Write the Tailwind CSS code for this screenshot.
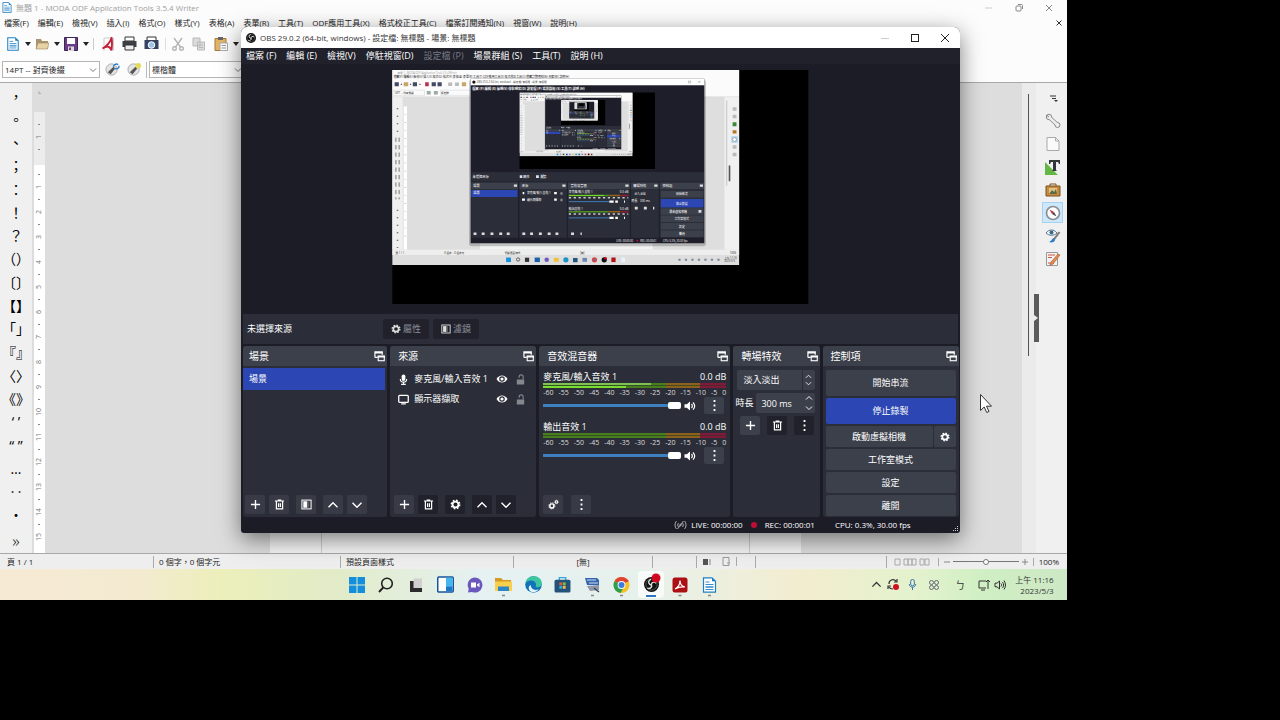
<!DOCTYPE html>
<html lang="zh-Hant">
<head>
    <meta charset="UTF-8">
    <meta name="viewport" content="width=device-width, initial-scale=1.0">
    <title>MODA ODF Application Tools - OBS</title>
    <script src="https://cdn.jsdelivr.net/npm/@tailwindcss/browser@4"></script>
</head>
<body class="h-screen overflow-hidden bg-black font-['Open_Sans','Noto_Sans_CJK_TC',sans-serif]">

    <!-- Shared icons -->
    <svg class="hidden">
        <symbol id="i-popout" viewBox="0 0 12 12"><path d="M1 7V1h8v3M1 2h8M1 7h3" fill="none" stroke="currentColor" stroke-width="1.3"/><rect x="4.6" y="5.6" width="6.6" height="5" fill="none" stroke="currentColor" stroke-width="1.2"/><path d="M4 6.2h8" stroke="currentColor" stroke-width="2"/></symbol>
        <symbol id="i-plus" viewBox="0 0 12 12"><path d="M6 1v10M1 6h10" stroke="currentColor" stroke-width="1.5"/></symbol>
        <symbol id="i-trash" viewBox="0 0 12 12"><path d="M1 2.2h10M4 1.2h4M2.6 2.5v8.3h6.8V2.5M5 4.5v4.3M7 4.5v4.3" fill="none" stroke="currentColor" stroke-width="1.3"/></symbol>
        <symbol id="i-filter" viewBox="0 0 12 12"><rect x="1" y="1.2" width="10" height="9.6" fill="none" stroke="currentColor" stroke-width="1.1"/><path d="M2.5 2.5h4v7h-4z" fill="currentColor"/><path d="M7.5 2.5v7" stroke="currentColor" stroke-width=".8" opacity=".6"/></symbol>
        <symbol id="i-up" viewBox="0 0 12 12"><path d="M1.5 8.3 6 3.8l4.500 4.500" fill="none" stroke="currentColor" stroke-width="1.4"/></symbol>
        <symbol id="i-down" viewBox="0 0 12 12"><path d="M1.500 3.800 6 8.300l4.500-4.500" fill="none" stroke="currentColor" stroke-width="1.4"/></symbol>
        <symbol id="i-gear" viewBox="0 0 12 12"><circle cx="6" cy="6" r="3.200" fill="none" stroke="currentColor" stroke-width="2"/><circle cx="6" cy="6" r="4.600" fill="none" stroke="currentColor" stroke-width="1.600" stroke-dasharray="1.900 1.713"/></symbol>
        <symbol id="i-gears" viewBox="0 0 12 12"><circle cx="4.200" cy="7.500" r="2.200" fill="none" stroke="currentColor" stroke-width="1.600"/><circle cx="4.200" cy="7.500" r="3.300" fill="none" stroke="currentColor" stroke-dasharray="1.400 1.200"/><circle cx="9.200" cy="3.200" r="1.300" fill="none" stroke="currentColor" stroke-width="1.100"/><circle cx="9.200" cy="3.200" r="2.100" fill="none" stroke="currentColor" stroke-width=".7" stroke-dasharray=".9 .75"/></symbol>
        <symbol id="i-dots" viewBox="0 0 12 12"><path d="M5 0h2v2.200H5zM5 4.900h2v2.200H5zM5 9.800h2V12H5z" fill="currentColor"/></symbol>
        <symbol id="i-eye" viewBox="0 0 12 12"><path d="M.5 6C3 1.200 9 1.200 11.500 6 9 10.800 3 10.800.5 6z" fill="currentColor"/><circle cx="6" cy="6" r="2.200" fill="none" stroke="#2b2e38" stroke-width="1.200"/></symbol>
        <symbol id="i-lock" viewBox="0 0 12 12"><path d="M2 6h8v5.500H2z" fill="currentColor"/><path d="M4.500 4V3.200a2.200 2.200 0 0 1 4.400 0V6" fill="none" stroke="currentColor" stroke-width="1.200"/></symbol>
        <symbol id="i-mic" viewBox="0 0 12 12"><rect x="4" y=".5" width="4" height="7" rx="2" fill="currentColor"/><path d="M2.500 5.500c0 4.500 7 4.500 7 0M6 9v2M3.500 11.300h5" fill="none" stroke="currentColor" stroke-width="1.200"/></symbol>
        <symbol id="i-monitor" viewBox="0 0 12 12"><rect x=".8" y="1.500" width="10.400" height="7.700" rx="1" fill="none" stroke="currentColor" stroke-width="1.400"/><path d="M3.500 10.800h5" stroke="currentColor" stroke-width="1.200"/></symbol>
        <symbol id="i-speaker" viewBox="0 0 12 12"><path d="M.5 4.200h2.300L6 1.500v9L2.800 7.800H.5z" fill="currentColor"/><path d="M7.500 4c1 1.200 1 2.800 0 4M9 2.300c2 2.200 2 5.200 0 7.400" fill="none" stroke="currentColor" stroke-width="1.200"/></symbol>
        <symbol id="i-caret" viewBox="0 0 6 4"><path d="M0 0h6L3 4z" fill="currentColor"/></symbol>
        <symbol id="i-chev" viewBox="0 0 8 6"><path d="m1 1.500 3 3 3-3" fill="none" stroke="currentColor"/></symbol>
        <symbol id="i-doc" viewBox="0 0 14 16"><path d="M1 .8h8.500L13 4.300v10.900H1z" fill="#fff" stroke="#1f7fc0" stroke-width="1.200"/><path d="M9.500.8V4.300H13z" fill="#1f7fc0"/><path d="M3 5h4M3 7.500h8M3 12.500h8" stroke="#3b8cc9"/><path d="M3 9h8v2H3z" fill="#63a5d6"/></symbol>
        <symbol id="i-obs" viewBox="0 0 16 16"><circle cx="8" cy="8" r="8" fill="#111"/><circle cx="8" cy="8" r="6" fill="none" stroke="#777" stroke-width=".7"/><path d="M7.600 2.500c-3 1-3.400 3.800-1.400 5.300 1 .7 1.800.6 2 .2M13 6.500c-2.400-2-5-.8-5.200 1.600 0 1.200.6 1.700 1.100 1.600M3.500 11.800c3 1.200 5-.7 4.600-3" fill="none" stroke="#ddd" stroke-width="1.500"/></symbol>
        <symbol id="i-style" viewBox="0 0 16 16"><circle cx="7" cy="8" r="6" fill="#e4e4e4" stroke="#aaa"/><path d="m3 11 6-6 2 2-5 6z" fill="#555"/></symbol>

        <!-- One level of the capture seen in the preview -->
        <g id="shot">
            <rect width="1280" height="720" fill="#000"/>
            <rect width="1067" height="600" fill="#dedede"/>
            <rect width="1067" height="83" fill="#fbfbfb"/>
            <rect y="83" width="32" height="470" fill="#f0f0f0"/><rect x="35" y="112" width="10" height="441" fill="#fff"/>
            <rect x="1022" y="83" width="45" height="470" fill="#f0f0f0"/><path d="M1029 94v262" stroke="#666"/><path d="M1035 294h5v48h-5z" fill="#555"/>
            <rect x="270" y="533" width="531" height="20" fill="#f2f2f2"/>
            <rect y="553" width="1067" height="16" fill="#eee"/>
            <rect y="569" width="1067" height="31" fill="url(#bar)"/>
            <g font-size="8" fill="#222">
                <text x="16" y="11" fill="#999">無題 1 - MODA ODF Application Tools 3.5.4 Writer</text>
                <text x="4" y="26" font-size="9">檔案(F)  編輯(E)  檢視(V)  插入(I)  格式(O)  樣式(Y)  表格(A)  表單(R)  工具(T)  ODF應用工具(X)  格式校正工具(C)  檔案訂閱通知(N)  視窗(W)  說明(H)</text>
                <text x="6" y="73">14PT -- 對齊後綴</text><text x="150" y="73">標楷體</text>
                <text x="10" y="565">頁 1 / 1</text><text x="160" y="565">0 個字，0 個字元</text><text x="346" y="565">預設頁面樣式</text><text x="578" y="565">[無]</text><text x="1038" y="565">100%</text>
            </g>
            <path d="M7 44h13M63 44h14M121 44h36" stroke="#434a66" stroke-width="12" stroke-dasharray="13 5"/><path d="M35 44h14M214 44h13" stroke="#c9a567" stroke-width="12"/><path d="M101 44h11" stroke="#b8304a" stroke-width="12"/><path d="M172 44h12M193 44h12" stroke="#bbb" stroke-width="11"/><path d="M26 44h4M54 44h4M83 44h4" stroke="#333" stroke-width="3"/>
            <path d="M106 70h12M128 70h12" stroke="#9aa" stroke-width="11"/><path d="M2 62h97v16H2zM149 62h92v16h-92zM0 82h1067" fill="none" stroke="#bbb"/>
            <path d="M16 118v80M16 430v120" stroke="#555" stroke-width="5" stroke-dasharray="3 20"/>
            <path d="M11 208v190M21 208v190" stroke="#333" stroke-width="2" stroke-dasharray="13 10"/>
            <path d="M40 135v400" stroke="#aaa" stroke-width="4" stroke-dasharray="2 23"/>
            <path d="M1047 120h12M1047 143h12M1047 237h12M1047 260h12" stroke="#bbb" stroke-width="11"/><path d="M1047 167h12" stroke="#3a8a3a" stroke-width="12"/><path d="M1047 190h12" stroke="#b5782a" stroke-width="10"/><path d="M1043 214h20" stroke="#a9d5f3" stroke-width="20"/><circle cx="1053" cy="214" r="6" fill="#fff" stroke="#888" stroke-width="2"/>
            <path d="M350 584h15" stroke="#1691dc" stroke-width="14"/><circle cx="387" cy="583" r="5" fill="none" stroke="#222" stroke-width="2"/><path d="M408 584h13" stroke="#333" stroke-width="13"/><path d="M438 584h16" stroke="#1a5fa8" stroke-width="14"/><circle cx="475" cy="584" r="7" fill="#6d5bc0"/><path d="M497 584h15" stroke="#f2c037" stroke-width="12"/><circle cx="534" cy="584" r="8" fill="#1b94c8"/><path d="M556 585h14" stroke="#24557e" stroke-width="13"/><path d="M585 584h14" stroke="#6a86b5" stroke-width="12"/><circle cx="622" cy="584" r="8" fill="#d9453a"/><circle cx="622" cy="584" r="3" fill="#3c7de0"/><circle cx="652" cy="584" r="8" fill="#111"/><circle cx="656" cy="579" r="4" fill="#d3061f"/><path d="M674 584h13" stroke="#b31217" stroke-width="14"/><path d="M704 584h12" stroke="#e8f2fa" stroke-width="14"/>
            <path d="M880 584h130" fill="none" stroke="#789" stroke-width="6" stroke-dasharray="7 13"/><text x="1021" y="582" font-size="8" fill="#333">上午 11:16</text><text x="1021" y="592" font-size="8" fill="#333">2023/5/3</text>
            <rect x="236" y="30" width="729" height="512" rx="8" fill="#000" opacity=".2"/>
            <rect x="241" y="27" width="719" height="506" fill="#1d1e29"/>
            <rect x="241" y="27" width="719" height="20" fill="#fff"/>
            <circle cx="251" cy="37" r="5" fill="#111"/><path d="M911 34h7v6h-7zM941 33l7 7M948 33l-7 7" fill="none" stroke="#555"/>
            <text x="260" y="40" font-size="8" fill="#444">OBS 29.0.2 (64-bit, windows) - 設定檔: 無標題 - 場景: 無標題</text>
            <text x="246" y="60" font-size="10" font-weight="700" fill="#fff">檔案 (F)  編輯 (E)  檢視(V)  停駐視窗(D)  設定檔 (P)  場景群組 (S)  工具(T)  說明 (H)</text>
            <rect x="392" y="70" width="416" height="234" fill="#000"/>
            <rect x="243" y="314" width="716" height="29" fill="#2b2e38"/>
            <path d="M243 346h144v170H243zM391 346h146v170H391zM540 346h191v170H540zM734 346h86v170h-86zM823 346h136v170H823z" fill="#2b2e38"/>
            <path d="M243 356h144M391 356h146M540 356h191M734 356h86M823 356h136" stroke="#3c404b" stroke-width="20"/>
            <path d="M243 380h142" stroke="#2c47b3" stroke-width="21"/>
            <path d="M826 382h131M826 435h131M826 458h131M826 481h131M826 504h131" stroke="#3c404b" stroke-width="20"/><path d="M826 410h131" stroke="#2c47b3" stroke-width="26"/>
            <path d="M543 386h123M543 436h123" stroke="#4c8f1f" stroke-width="5"/><path d="M543 386h108" stroke="#79dc2f" stroke-width="3"/><path d="M666 386h35M666 436h35" stroke="#8f6418" stroke-width="5"/><path d="M701 386h25M701 436h25" stroke="#8f1a35" stroke-width="5"/>
            <path d="M543 393h183M543 443h183" stroke="#ccc" stroke-width="5" stroke-dasharray="7 8"/>
            <path d="M543 405h126M543 455h126" stroke="#3d7fbf" stroke-width="3"/><path d="M668 405h13M668 455h13M686 405h8M686 455h8M713 405h3M713 455h3" stroke="#fff" stroke-width="7"/>
            <path d="M250 504h9M275 504h9M302 504h9M329 504h9M352 504h9M400 504h9M424 504h9M451 504h9M478 504h9M502 504h9M550 504h9M579 504h4M746 425h9M774 425h9M802 425h4M392 328h8M442 328h9M942 435h9" stroke="#ddd" stroke-width="8"/>
            <g font-size="10" fill="#fff">
                <text x="247" y="332">未選擇來源</text><text x="402" y="332">屬性</text><text x="454" y="332">濾鏡</text>
                <text x="249" y="360">場景</text><text x="398" y="360">來源</text><text x="548" y="360">音效混音器</text><text x="741" y="360">轉場特效</text><text x="831" y="360">控制項</text>
                <text x="249" y="383">場景</text>
            </g>
            <g font-size="9" fill="#fff">
                <text x="414" y="383">麥克風/輸入音效 1</text><text x="414" y="403">顯示器擷取</text>
                <text x="543" y="380">麥克風/輸入音效 1</text><text x="700" y="380">0.0 dB</text><text x="543" y="430">輸出音效 1</text><text x="700" y="430">0.0 dB</text>
                <text x="744" y="384">淡入淡出</text><text x="736" y="407">時長</text><text x="762" y="407">300 ms</text>
                <text x="873" y="386">開始串流</text><text x="873" y="414">停止錄製</text><text x="853" y="439">啟動虛擬相機</text><text x="868" y="462">工作室模式</text><text x="882" y="485">設定</text><text x="882" y="508">離開</text>
                <text x="689" y="529" font-size="8">LIVE: 00:00:00</text><text x="763" y="529" font-size="8">REC: 00:00:01</text><text x="833" y="529" font-size="8">CPU: 0.3%, 30.00 fps</text>
            </g>
            <path d="M401 379h5M399 399h9M498 379h8M498 399h8" stroke="#fff" stroke-width="7"/><path d="M517 380h7M517 400h7" stroke="#85878f" stroke-width="8"/>
            <path d="M374 356h10M523 356h10M717 356h10M806 356h10M946 356h10" stroke="#ddd" stroke-width="7"/><circle cx="754" cy="525" r="3" fill="#c00d35"/>
        </g>
        <linearGradient id="bar"><stop offset="0" stop-color="#f7ead5"/><stop offset=".2" stop-color="#ecefba"/><stop offset=".42" stop-color="#e3efe6"/><stop offset=".75" stop-color="#f2efd2"/><stop offset="1" stop-color="#cbe9bf"/></linearGradient>
    </svg>

    <div class="relative flex h-5/6 w-5/6 flex-col overflow-hidden bg-[#dddddd] text-[8px] leading-[12px] text-[#222]">

        <!-- Writer title and menu -->
        <header class="flex shrink-0 flex-col border-b border-[#a8a8a8] bg-[#fcfcfc]">
            <div class="flex h-[15px] items-center gap-1 pl-[2px] text-[#a0a0a0]">
                <svg class="h-[11px] w-[10px]"><use href="#i-doc"/></svg>
                <span class="flex-1">無題 1 - MODA ODF Application Tools 3.5.4 Writer</span>
                <div class="flex gap-[20px] pr-[13px] text-[#888]">
                    <button aria-label="最小化"><svg class="size-[10px]" viewBox="0 0 10 10"><path d="M1 5h7" stroke="#ccc"/></svg></button>
                    <button aria-label="還原"><svg class="size-[10px]" viewBox="0 0 10 10" fill="none" stroke="currentColor"><rect x="2" y="3" width="5" height="5" rx="1"/><path d="M4 1.500h3.500q1 0 1 1V6"/></svg></button>
                    <button aria-label="關閉"><svg class="size-[10px]" viewBox="0 0 10 10"><path d="m2 2 6 6M8 2 2 8" stroke="currentColor"/></svg></button>
                </div>
            </div>
            <nav class="flex h-[15px] items-center gap-[9px] pl-1 whitespace-nowrap">
                <button>檔案(F)</button><button>編輯(E)</button><button>檢視(V)</button><button>插入(I)</button><button>格式(O)</button><button>樣式(Y)</button><button>表格(A)</button><button>表單(R)</button><button>工具(T)</button><button>ODF應用工具(X)</button><button>格式校正工具(C)</button><button>檔案訂閱通知(N)</button><button>視窗(W)</button><button>說明(H)</button>
                <button class="mr-1 ml-auto" aria-label="關閉文件"><svg class="size-[8px]" viewBox="0 0 8 8"><path d="m1.500 1.500 5 5M6.500 1.500l-5 5" stroke="#333"/></svg></button>
            </nav>
            <div class="flex h-[27px] items-center pl-[6px]">
                <svg class="mr-[5px] h-[14px] w-[14px]"><use href="#i-doc"/></svg><svg class="mr-[4px] h-[4px] w-[6px]"><use href="#i-caret"/></svg>
                <svg class="mr-[5px] h-[14px] w-[14px]" viewBox="0 0 14 14"><path d="M1 2h5l1 2h6v8H1z" fill="#a8946f"/><path d="M3 6h11l-1.500 6H1z" fill="#e6d2a4" stroke="#9b8660" stroke-width=".6"/></svg><svg class="mr-[4px] h-[4px] w-[6px]"><use href="#i-caret"/></svg>
                <svg class="mr-[5px] size-[14px]" viewBox="0 0 14 14"><path d="M.5.5h13v13H.5z" fill="#6d3c87" stroke="#3f2452"/><path d="M3 1h8v6H3z" fill="#fff"/><path d="M4 9.500h6V14H4z" fill="#d9d9d9"/><path d="M5 10.500h2V13H5z" fill="#6d3c87"/></svg><svg class="mr-[4px] h-[4px] w-[6px]"><use href="#i-caret"/></svg>
                <span class="mr-[7px] h-3 border-l border-[#ccc]"></span>
                <svg class="mr-[7px] size-[14px]" viewBox="0 0 14 14"><path d="M3 1v13M3 1h9.500v12.500" fill="none" stroke="#ccc"/><path d="M1.500 11.500C6 9 9 5.500 10.500 1c1 4 .5 8 0 12.500C9 8.500 6 9 1.500 11.500z" fill="none" stroke="#c3203a" stroke-width="1.900"/></svg>
                <svg class="mr-[7px] size-[15px]" viewBox="0 0 15 15"><path d="M3 1h9v4H3z" fill="#fff" stroke="#333"/><path d="M.5 5h14v6H.5z" fill="#3c3f45"/><path d="M3 9h9v5H3z" fill="#eee" stroke="#333"/></svg>
                <svg class="mr-[6px] size-[15px]" viewBox="0 0 15 15"><path d="M3 1h9v4H3z" fill="#fff" stroke="#333"/><path d="M.5 4h14v9H.5z" fill="#34415f"/><circle cx="7.500" cy="9" r="3.300" fill="#9dc2ea" stroke="#fff"/></svg>
                <span class="mr-[5px] h-3 border-l border-[#ddd]"></span>
                <svg class="mr-[7px] size-[14px]" viewBox="0 0 14 14" fill="none" stroke="#b5b5b5" stroke-width="1.400"><path d="m3 1 6.500 9M11 1 4.500 10"/><circle cx="3.500" cy="11.500" r="1.800"/><circle cx="10.500" cy="11.500" r="1.800"/></svg>
                <svg class="mr-[8px] size-[14px]" viewBox="0 0 14 14" fill="#dcdcdc" stroke="#b8b8b8"><path d="M1 1h7v8H1zM5.500 5h7v8h-7z"/><path d="M7 8h4M7 10.500h4"/></svg>
                <svg class="mr-[5px] size-[14px]" viewBox="0 0 14 14"><path d="M1 1.500h11v12H1z" fill="#e2b566" stroke="#a77b36"/><path d="M4 0h5v3H4z" fill="#666"/><path d="M6 6h7.500v7.500H6z" fill="#fff" stroke="#aaa"/><path d="M7.500 8.500h4.500M7.500 11h4.500" stroke="#999"/></svg>
                <svg class="h-[4px] w-[6px]"><use href="#i-caret"/></svg>
            </div>
            <div class="flex h-[25px] items-center pl-[2px]">
                <label class="relative mr-[5px] flex"><input aria-label="段落樣式" value="14PT -- 對齊後綴" class="h-[17px] w-[98px] border border-[#b5b5b5] bg-white px-[2px]"><svg class="absolute top-[6px] right-[3px] h-[6px] w-[8px] text-[#777]"><use href="#i-chev"/></svg></label>
                <svg class="mr-[7px] size-[15px]" viewBox="0 0 16 16"><use href="#i-style" width="16" height="16"/><path d="M9 5a3 3 0 0 1 5-2M15 4a3 3 0 0 1-5 2.500" fill="none" stroke="#2f7dc6" stroke-width="1.500"/></svg>
                <svg class="mr-[4px] size-[15px]" viewBox="0 0 16 16"><use href="#i-style" width="16" height="16"/><circle cx="12" cy="4" r="3" fill="#e3dc58"/></svg>
                <span class="mr-[2px] h-4 border-l border-[#bbb]"></span>
                <label class="relative flex"><input aria-label="字型名稱" value="標楷體" class="h-[17px] w-[94px] border border-[#b5b5b5] bg-white px-[2px]"><svg class="absolute top-[6px] right-[1px] h-[6px] w-[8px] text-[#777]"><use href="#i-chev"/></svg></label>
            </div>
        </header>

        <!-- Document area -->
        <div class="flex min-h-0 flex-1">
            <aside class="flex w-[32px] shrink-0 flex-col bg-[#f0f0f0] pt-[2px] text-[14px] leading-[14px] text-black">
                <div id="marks" class="flex min-h-0 flex-1 flex-col"></div>
                <button class="mt-1 mb-[2px] h-[20px] text-[17px] font-light">»</button>
            </aside>
            <div class="flex w-[14px] shrink-0 flex-col items-center text-[#777]">
                <span class="h-[29px] pt-[2px] text-[7px] leading-[12px]">⌞</span>
                <div id="ruler" class="flex w-[11px] flex-1 flex-col overflow-hidden bg-linear-to-b from-[#ececec] from-12% to-white to-12% pt-1 text-[7px]"></div>
            </div>
            <div class="flex flex-1 items-end">
                <div class="ml-[224px] flex h-5 w-[531px] bg-[#f4f4f4] px-[51px]"><span class="flex-1 border-x border-[#ccc]"></span></div>
            </div>
            <div class="flex w-[14px] justify-center bg-[#ebebeb] pt-[11px]"><span class="h-[262px] w-px bg-[#555]"></span></div>
            <aside class="relative flex w-[31px] shrink-0 flex-col items-center gap-[2px] bg-[#f0f0f0] pt-[4px] pl-[3px]">
                <span class="absolute top-[211px] left-[-2px] flex h-[48px] w-[5px] items-center bg-[#5a5a5a]"><svg class="h-[6px] w-[4px]" viewBox="0 0 4 6"><path d="m0 0 4 3-4 3z" fill="#eee"/></svg></span>
                <button class="flex size-[21px] items-center justify-center" aria-label="側邊欄設定"><svg class="size-[10px]" viewBox="0 0 10 10"><path d="M2 3h6M4 5.500h4" stroke="#333"/><path d="M6 7h4L8 9z" fill="#333"/></svg></button>
                <button class="flex size-[21px] items-center justify-center" aria-label="屬性"><svg class="size-[16px]" viewBox="0 0 16 16"><path d="m4.500 4.500 7.500 7" stroke="#888" stroke-width="4"/><circle cx="4" cy="4" r="2.700" fill="#eee" stroke="#888"/><circle cx="12.500" cy="12" r="2.500" fill="#eee" stroke="#888"/><path d="m5 5 7 6.500" stroke="#eee" stroke-width="2.500"/><path d="m1 2 3 2" stroke="#888"/></svg></button>
                <button class="flex size-[21px] items-center justify-center" aria-label="頁面"><svg class="size-[16px]" viewBox="0 0 16 16"><path d="M2 1.500h8.500L14 5v9.500H2z" fill="#fafafa" stroke="#aaa"/><path d="M10.500 1.500V5H14" fill="none" stroke="#aaa"/></svg></button>
                <button class="flex size-[21px] items-center justify-center" aria-label="樣式"><svg class="size-[16px]" viewBox="0 0 16 16"><path d="M0 3v13h13z" fill="#64b745"/><path d="M4 1h11v4h-1l-1-2h-2v8l1 1H7l1-1V3H6L5 5H4z" fill="#30373d"/></svg></button>
                <button class="flex size-[21px] items-center justify-center" aria-label="圖庫"><svg class="size-[16px]" viewBox="0 0 16 16"><path d="M5 4V2h6v2" fill="none" stroke="#7a5220"/><path d="M1 4h14v10H1z" fill="#c88a3c" stroke="#7a5220"/><path d="M4 6h8v6H4z" fill="#dec48a"/><path d="m4 12 3-4 2 2 2-3 1 5z" fill="#5d6b45"/></svg></button>
                <button class="flex size-[21px] items-center justify-center border border-[#a3d2f2] bg-[#cde8fa]" aria-label="導覽"><svg class="size-[16px]" viewBox="0 0 16 16"><circle cx="8" cy="8" r="6.500" fill="#fff" stroke="#8a8f95" stroke-width="1.700"/><path d="M4.500 4.500 9 7 7 9z" fill="#c8273f"/><path d="M11.500 11.500 9 7 7 9z" fill="#444"/></svg></button>
                <button class="flex size-[21px] items-center justify-center" aria-label="樣式檢查"><svg class="size-[16px]" viewBox="0 0 16 16"><path d="M1 5c3-4 8-4 11 0-3 3-8 3-11 0z" fill="#f4f7fa" stroke="#55748f"/><circle cx="6.500" cy="4.500" r="2" fill="#3f6787"/><path d="m14.500 4-6 8" stroke="#777" stroke-width="2"/><path d="M9 10c-2 0-2 3-5 4 3 1 6 0 6-2.500z" fill="#2f7dc6"/></svg></button>
                <button class="flex size-[21px] items-center justify-center" aria-label="管理變更"><svg class="size-[16px]" viewBox="0 0 16 16"><path d="M1.500 1.500h11v13h-11z" fill="#f3f3f3" stroke="#999"/><path d="M3 4h7M3 6.500h4M3 12h6" stroke="#d2553d"/><path d="M15 4 8 13l-3 1.500L6 11l7-8z" fill="#e58a52" stroke="#9c5a30" stroke-width=".6"/></svg></button>
            </aside>
        </div>

        <!-- Writer status bar -->
        <footer class="flex h-[16px] shrink-0 items-center border-t border-[#a8a8a8] bg-[#eeeeee] whitespace-nowrap">
            <span class="w-[154px] border-r border-[#aaa] pl-[7px]">頁 1 / 1</span>
            <span class="w-[187px] border-r border-[#aaa] pl-[5px]">0 個字，0 個字元</span>
            <span class="w-[173px] border-r border-[#aaa] pl-[5px]">預設頁面樣式</span>
            <span class="w-[139px] border-r border-[#aaa] text-center">[無]</span>
            <span class="h-3 w-[44px] border-r border-[#aaa]"></span>
            <span class="flex w-[40px] items-center justify-between border-r border-[#aaa] px-[6px]"><svg class="h-[6px] w-[8px]" viewBox="0 0 8 6"><path d="M0 0h5v6H0z" fill="#555"/><path d="M7 0v6" stroke="#888"/></svg><svg class="h-[9px] w-[8px]" viewBox="0 0 8 9"><path d="M1 .5h6v8H1zM5 6h3" fill="none" stroke="#999"/></svg></span>
            <span class="h-3 w-[19px] border-r border-[#aaa]"></span>
            <span class="h-3 flex-1 border-r border-[#aaa]"></span>
            <svg class="mx-[7px] h-[8px] w-[37px]" viewBox="0 0 37 8" fill="none" stroke="#aaa"><path d="M1 1h5v6H1zM10 1h4v6h-4zM14 1h4v6h-4zM18 1h4v6h-4zM26 1h4v6h-4zM31 1h4v6h-4z"/></svg>
            <span class="flex w-[96px] items-center gap-[3px] border-x border-[#aaa] px-[5px] text-[#888]">
                <svg class="size-[6px] shrink-0" viewBox="0 0 6 6"><path d="M0 3h6" stroke="currentColor"/></svg>
                <input type="range" aria-label="縮放" class="h-[8px] min-w-0 flex-1 appearance-none bg-[linear-gradient(#777,#777)] bg-[length:100%_1px] bg-center bg-no-repeat [&::-webkit-slider-thumb]:size-[6px] [&::-webkit-slider-thumb]:appearance-none [&::-webkit-slider-thumb]:rounded-full [&::-webkit-slider-thumb]:border [&::-webkit-slider-thumb]:border-[#777] [&::-webkit-slider-thumb]:bg-white" value="50">
                <svg class="size-[6px] shrink-0" viewBox="0 0 6 6"><path d="M0 3h6M3 0v6" stroke="currentColor"/></svg>
            </span>
            <span class="w-[33px] pl-[5px]">100%</span>
        </footer>

        <!-- Windows taskbar -->
        <footer class="flex h-[31px] shrink-0 justify-center bg-[linear-gradient(90deg,#f7ead5_0%,#f3ead0_13%,#ecefba_21%,#e1ebc6_31%,#e5f1f2_45%,#e6f1ec_60%,#f3edd0_75%,#e3f2cd_86%,#d0efc3_92%,#cde8c5_100%)]">
            <div class="grid w-[382px] grid-cols-13 place-items-center">
                <button aria-label="開始"><svg class="size-[16px]" viewBox="0 0 16 16"><path d="M0 0h7.500v7.500H0zM8.500 0H16v7.500H8.500zM0 8.500h7.500V16H0zM8.500 8.500H16V16H8.500z" fill="#138fdc"/></svg></button>
                <button aria-label="搜尋"><svg class="size-[16px]" viewBox="0 0 16 16"><circle cx="9" cy="6.500" r="5.300" fill="none" stroke="#222" stroke-width="1.600"/><path d="M5.200 10.500 1 15" stroke="#222" stroke-width="1.900"/></svg></button>
                <button aria-label="工作檢視"><svg class="size-[16px]" viewBox="0 0 16 16"><path d="M2 4h9v11H2z" fill="#2b2b2b"/><path d="M2 11h12v4H2z" fill="#2b2b2b"/><path d="M5.500 1.500H14V11H5.500z" fill="#d0d0d0"/></svg></button>
                <button aria-label="小工具"><svg class="size-[17px]" viewBox="0 0 16 16"><rect x=".7" y="1" width="14.600" height="14" rx="1" fill="#fff" stroke="#14569c" stroke-width="1.400"/><path d="M8.500 1.700h6v8h-6z" fill="#43b5ef"/><path d="M8.500 9.700h6v4.600h-6z" fill="#1877c9"/></svg></button>
                <button aria-label="聊天"><svg class="size-[16px]" viewBox="0 0 16 16"><path d="M8 .5a7.500 7.500 0 1 1-3 14.400L1 15.500l.7-3.700A7.500 7.500 0 0 1 8 .5z" fill="#6a58bd"/><path d="M4 5.500h5v5H4zM10 7.500l2.500-1.700v4.400L10 8.500z" fill="#fff"/></svg></button>
                <button aria-label="檔案總管"><svg class="mt-1 h-[20px] w-[17px]" viewBox="0 0 17 20"><path d="M0 1h6l2 2h8v4H0z" fill="#d69a24"/><path d="M0 4.500h17V14H0z" fill="#fbcf4e"/><path d="M3 9.500h11V14H3z" fill="#2d86c7"/><path d="M7 18.500h3" stroke="#888" stroke-width="1.500"/></svg></button>
                <button aria-label="Edge"><svg class="size-[17px]" viewBox="0 0 16 16"><circle cx="8" cy="8" r="7.800" fill="#1272b8"/><path d="M.4 7C1 2.500 4.500.2 8 .2c4.500 0 7.800 3 7.800 6.600 0 2.800-2.500 4-4.500 3.700-1.200-.2-1.500-.8-1-1.600C11 6 8 3.800 5 4.300 2.800 4.700 1 5.700.4 7z" fill="#3cc6a0"/><path d="M5.500 9.500c.3 3 3.500 4.500 7.500 3-3 4-9 3.500-9.500-1 0-1.500 1-2.700 2-3z" fill="#e4f3fb"/></svg></button>
                <button aria-label="Microsoft Store"><svg class="size-[17px]" viewBox="0 0 16 16"><path d="M5 4V1.500h6V4" fill="none" stroke="#35a5dc" stroke-width="1.300"/><rect x=".5" y="3.500" width="15" height="12" rx="1.500" fill="#235278"/><path d="M5 6h2.700v2.700H5z" fill="#e8573d"/><path d="M8.300 6H11v2.700H8.300z" fill="#86bb3b"/><path d="M5 9.300h2.700V12H5z" fill="#2ea7e0"/><path d="M8.300 9.300H11V12H8.300z" fill="#f6bc33"/></svg></button>
                <button aria-label="遠端工具"><svg class="mt-1 h-[20px] w-[17px]" viewBox="0 0 17 20"><path d="M1 1h12l2 2v5H3z" fill="#3564ad"/><path d="M3 3h9M5 6h9" stroke="#cfe0f5"/><path d="m3 9 12-1v5l-9 1z" fill="#8f97a8"/><path d="m10 11 5 4" stroke="#343c52" stroke-width="1.300"/><path d="M7 18.500h3" stroke="#888" stroke-width="1.500"/></svg></button>
                <button aria-label="Chrome"><svg class="mt-1 h-[20px] w-[17px]" viewBox="0 0 17 20"><circle cx="8.500" cy="8" r="8" fill="#f6c224"/><path d="M8.500 8 1.600 4a8 8 0 0 1 13.800 0z" fill="#dd4435"/><path d="M8.500 8 1.600 4a8 8 0 0 0 5.900 12l3-5z" fill="#2f9e50"/><path d="M5 4h10.400" stroke="#dd4435" stroke-width="1.500"/><circle cx="8.500" cy="8" r="3.900" fill="#fff"/><circle cx="8.500" cy="8" r="3" fill="#3c7de0"/><path d="M7 18.500h3" stroke="#888" stroke-width="1.500"/></svg></button>
                <button aria-label="OBS" class="flex h-[27px] w-[26px] items-center justify-center rounded-sm bg-white/70"><svg class="size-[24px]" viewBox="0 0 24 24"><use href="#i-obs" x="5" y="4" width="15" height="15"/><circle cx="17" cy="5" r="4.500" fill="#d3061f"/><path d="M7 23h10" stroke="#2f74c0" stroke-width="2"/></svg></button>
                <button aria-label="Acrobat"><svg class="mt-1 h-[20px] w-[16px]" viewBox="0 0 16 20"><rect x=".5" y=".5" width="15" height="15" rx="2.500" fill="#ac0f14"/><path d="M3 12c3-1.500 5-5 5-8.500C8 7 10 9.500 13 10c-4-.6-7 .3-10 2z" fill="none" stroke="#fff" stroke-width="1.200"/><path d="M6.500 18.500h3" stroke="#888" stroke-width="1.500"/></svg></button>
                <button aria-label="Writer"><svg class="mt-1 h-[20px] w-[15px]" viewBox="0 0 15 20"><use href="#i-doc" width="15" height="16"/><path d="M6 18.500h3" stroke="#888" stroke-width="1.500"/></svg></button>
            </div>
            <div class="absolute right-[13px] bottom-0 flex h-[31px] items-center text-[#333]">
                <svg class="mr-[5px] size-[11px]"><use href="#i-up"/></svg>
                <svg class="mr-[7px] size-[13px]" viewBox="0 0 13 13"><path d="M2 6a4 4 0 0 1 7-3M10 1v3H7M1 11V8h3M2 9c1 2 2 2 4 2" fill="none" stroke="#333" stroke-width="1.200"/><circle cx="9" cy="9" r="3" fill="#cf1020"/></svg>
                <svg class="mr-[10px] size-[11px]" viewBox="0 0 12 12" fill="none" stroke="#2d6aa8"><rect x="4" y=".5" width="4" height="7" rx="2"/><path d="M2.500 5.500c0 4.500 7 4.500 7 0M6 9v3"/></svg>
                <svg class="mr-[15px] size-[12px]" viewBox="0 0 12 12" fill="none" stroke="#667"><circle cx="3.500" cy="3.500" r="2"/><circle cx="8.500" cy="3.500" r="2"/><circle cx="3.500" cy="8.500" r="2"/><circle cx="8.500" cy="8.500" r="2"/></svg>
                <span class="mr-[13px] text-[10px]">ㄅ</span>
                <svg class="mr-[4px] size-[12px]" viewBox="0 0 12 12" fill="none" stroke="#333"><path d="M8 2H1v7h7M3 11h4M10 1v9M8 3l2-2 2 2"/></svg>
                <svg class="mr-[9px] size-[12px]" viewBox="0 0 12 12" fill="none" stroke="#333"><path d="M1 4.200h2L5.500 2v8L3 7.800H1zM7 4.500c.8 1 .8 2 0 3M8.500 3c1.500 2 1.500 4 0 6M10 1.500c2 3 2 6 0 9"/></svg>
                <div class="text-right leading-[11px]"><div>上午 11:16</div><div>2023/5/3</div></div>
            </div>
        </footer>

        <!-- OBS window -->
        <main class="absolute top-[27px] right-[107px] bottom-[67px] left-[241px] flex flex-col overflow-hidden rounded-t-[6px] rounded-b-[3px] bg-[#1c1c27] text-[9px] text-white shadow-[0_6px_22px_rgba(0,0,0,0.5)]">
            <div class="flex h-[21px] shrink-0 items-center gap-1 bg-white pl-[5px] text-[8px] text-[#333]">
                <svg class="size-[10px]"><use href="#i-obs"/></svg>
                <span class="flex-1">OBS 29.0.2 (64-bit, windows) - 設定檔: 無標題 - 場景: 無標題</span>
                <div class="flex gap-5 pr-[10px]">
                    <button aria-label="最小化"><svg class="size-[10px]" viewBox="0 0 10 10"><path d="M1 5.500h8" stroke="#ccc"/></svg></button>
                    <button aria-label="最大化"><svg class="size-[10px]" viewBox="0 0 10 10"><rect x="1.500" y="1.500" width="7" height="7" fill="none" stroke="#222"/></svg></button>
                    <button aria-label="關閉"><svg class="size-[10px]" viewBox="0 0 10 10"><path d="m1 1 8 8M9 1 1 9" stroke="#222"/></svg></button>
                </div>
            </div>
            <nav class="flex h-4 shrink-0 items-center gap-[10px] bg-[#20212b] pl-[5px] whitespace-nowrap">
                <button>檔案 (F)</button><button>編輯 (E)</button><button>檢視(V)</button><button>停駐視窗(D)</button><button class="text-[#777a85]" disabled>設定檔 (P)</button><button>場景群組 (S)</button><button>工具(T)</button><button>說明 (H)</button>
            </nav>
            <div class="min-h-0 flex-1 pt-[6px] pb-[10px]">
                <svg class="h-full w-full" viewBox="0 0 1280 720">
                    <use href="#shot"/>
                    <g transform="translate(392 70) scale(.325)"><use href="#shot"/>
                        <g transform="translate(392 70) scale(.325)"><use href="#shot"/>
                            <g transform="translate(392 70) scale(.325)"><use href="#shot"/></g>
                        </g>
                    </g>
                </svg>
            </div>
            <div class="mx-[2px] flex h-[30px] shrink-0 items-center bg-[#2b2e38] pl-1">
                <span class="w-[136px]">未選擇來源</span>
                <button class="mr-1 flex h-5 w-[46px] items-center justify-center gap-[2px] rounded-xs bg-[#20212b] text-[#8a8d97]"><svg class="size-[10px] text-[#ddd]"><use href="#i-gear"/></svg>屬性</button>
                <button class="flex h-5 w-[46px] items-center justify-center gap-[2px] rounded-xs bg-[#20212b] text-[#8a8d97]"><svg class="size-[10px] text-[#ddd]"><use href="#i-filter"/></svg>濾鏡</button>
            </div>

            <div class="mr-px ml-[2px] mt-[2px] grid h-[171px] shrink-0 grid-cols-[144fr_146fr_191fr_86fr_136fr] gap-[3px]">
                <section class="flex flex-col overflow-hidden rounded-[3px] bg-[#2b2e38]">
                    <h2 class="flex h-5 items-center justify-between bg-[#3c404b] pr-[2px] pl-[6px] text-[10px]">場景<svg class="size-[11px]"><use href="#i-popout"/></svg></h2>
                    <ul class="flex-1 pt-[2px] pr-[2px]"><li class="h-[22px] bg-[#2c47b3] pl-[6px] leading-[22px]">場景</li></ul>
                    <div class="flex pb-[3px] pl-[2px] *:flex *:h-[19px] *:items-center *:justify-center *:rounded-xs *:bg-[#383b46]">
                        <button class="mr-1 w-5" aria-label="新增場景"><svg class="size-[11px]"><use href="#i-plus"/></svg></button>
                        <button class="mr-[7px] w-5" aria-label="移除場景"><svg class="size-[11px]"><use href="#i-trash"/></svg></button>
                        <button class="mr-[7px] w-5" aria-label="場景濾鏡"><svg class="size-[11px]"><use href="#i-filter"/></svg></button>
                        <button class="mr-1 w-5" aria-label="上移"><svg class="size-[12px]"><use href="#i-up"/></svg></button>
                        <button class="w-5" aria-label="下移"><svg class="size-[12px]"><use href="#i-down"/></svg></button>
                    </div>
                </section>

                <section class="flex flex-col overflow-hidden rounded-[3px] bg-[#2b2e38]">
                    <h2 class="flex h-5 items-center justify-between bg-[#3c404b] pr-[2px] pl-[8px] text-[10px]">來源<svg class="size-[11px]"><use href="#i-popout"/></svg></h2>
                    <ul class="flex-1 pt-[3px] pr-[10px] pl-[8px]">
                        <li class="flex h-5 items-center"><svg class="mr-[5px] size-[11px]"><use href="#i-mic"/></svg><span class="flex-1">麥克風/輸入音效 1</span><svg class="mr-[7px] size-[12px]"><use href="#i-eye"/></svg><svg class="size-[11px] text-[#85878f]"><use href="#i-lock"/></svg></li>
                        <li class="flex h-5 items-center"><svg class="mr-[5px] size-[11px]"><use href="#i-monitor"/></svg><span class="flex-1">顯示器擷取</span><svg class="mr-[7px] size-[12px]"><use href="#i-eye"/></svg><svg class="size-[11px] text-[#85878f]"><use href="#i-lock"/></svg></li>
                    </ul>
                    <div class="flex pb-[3px] pl-1 *:flex *:h-[19px] *:items-center *:justify-center *:rounded-xs">
                        <button class="mr-1 w-5 bg-[#383b46]" aria-label="新增來源"><svg class="size-[11px]"><use href="#i-plus"/></svg></button>
                        <button class="mr-[7px] w-5 bg-[#20212b]" aria-label="移除來源"><svg class="size-[11px]"><use href="#i-trash"/></svg></button>
                        <button class="mr-[7px] w-5 bg-[#20212b]" aria-label="來源屬性"><svg class="size-[11px]"><use href="#i-gear"/></svg></button>
                        <button class="mr-1 w-5 bg-[#20212b]" aria-label="上移"><svg class="size-[12px]"><use href="#i-up"/></svg></button>
                        <button class="w-5 bg-[#20212b]" aria-label="下移"><svg class="size-[12px]"><use href="#i-down"/></svg></button>
                    </div>
                </section>

                <section class="flex flex-col overflow-hidden rounded-[3px] bg-[#2b2e38]">
                    <h2 class="flex h-5 items-center justify-between bg-[#3c404b] pr-[2px] pl-[8px] text-[10px]">音效混音器<svg class="size-[11px]"><use href="#i-popout"/></svg></h2>
                    <div id="mixer" class="flex-1 pr-1 pl-[4px] pt-[4px]"></div>
                    <div class="flex gap-2 pb-[3px] pl-1 *:flex *:h-[19px] *:w-5 *:items-center *:justify-center *:rounded-xs *:bg-[#383b46]">
                        <button aria-label="進階音訊內容"><svg class="size-[11px]"><use href="#i-gears"/></svg></button>
                        <button aria-label="混音器選單"><svg class="size-[11px]"><use href="#i-dots"/></svg></button>
                    </div>
                </section>

                <section class="flex flex-col overflow-hidden rounded-[3px] bg-[#2b2e38]">
                    <h2 class="flex h-5 items-center justify-between bg-[#3c404b] pr-[2px] pl-[8px] text-[10px]">轉場特效<svg class="size-[11px]"><use href="#i-popout"/></svg></h2>
                    <div class="relative mt-1 mr-[5px] ml-1">
                        <select aria-label="轉場" class="h-5 w-full appearance-none rounded-xs bg-[#3c404b] pl-[6px]"><option>淡入淡出</option></select>
                        <span class="pointer-events-none absolute inset-y-0 right-0 flex w-[13px] flex-col items-center justify-center border-l border-[#2b2e38]"><svg class="size-[7px]"><use href="#i-up"/></svg><svg class="size-[7px]"><use href="#i-down"/></svg></span>
                    </div>
                    <div class="relative mt-[3px] mr-[5px] ml-[2px] flex items-center gap-[3px] whitespace-nowrap">
                        <label for="duration">時長</label>
                        <input id="duration" value="300 ms" class="h-5 min-w-0 flex-1 rounded-xs bg-[#3c404b] pl-[5px]">
                        <span class="absolute inset-y-0 right-[2px] flex flex-col items-center justify-center gap-[2px]"><svg class="size-[8px]"><use href="#i-up"/></svg><svg class="size-[8px]"><use href="#i-down"/></svg></span>
                    </div>
                    <div class="mt-[3px] flex gap-[7px] pl-[7px] *:flex *:h-[19px] *:w-5 *:items-center *:justify-center *:rounded-xs">
                        <button class="bg-[#3c404b]" aria-label="新增轉場"><svg class="size-[11px]"><use href="#i-plus"/></svg></button>
                        <button class="bg-[#20212b]" aria-label="移除轉場"><svg class="size-[11px]"><use href="#i-trash"/></svg></button>
                        <button class="bg-[#20212b]" aria-label="轉場選單"><svg class="size-[11px]"><use href="#i-dots"/></svg></button>
                    </div>
                </section>

                <section class="flex flex-col overflow-hidden rounded-[3px] bg-[#2b2e38]">
                    <h2 class="flex h-5 items-center justify-between bg-[#3c404b] pr-[2px] pl-[8px] text-[10px]">控制項<svg class="size-[11px]"><use href="#i-popout"/></svg></h2>
                    <div class="flex flex-col gap-[2px] px-[3px] pt-[4px]">
                        <button class="h-[26px] rounded-xs bg-[#3c404b]">開始串流</button>
                        <button class="h-[26px] rounded-xs bg-[#2c47b3]">停止錄製</button>
                        <div class="flex gap-px"><button class="h-[21px] flex-1 rounded-xs bg-[#3c404b]">啟動虛擬相機</button><button class="flex h-[21px] w-[22px] items-center justify-center rounded-xs bg-[#3c404b]" aria-label="虛擬相機設定"><svg class="size-[10px]"><use href="#i-gear"/></svg></button></div>
                        <button class="h-[21px] rounded-xs bg-[#3c404b]">工作室模式</button>
                        <button class="h-[21px] rounded-xs bg-[#3c404b]">設定</button>
                        <button class="h-[21px] rounded-xs bg-[#3c404b]">離開</button>
                    </div>
                </section>
            </div>

            <div class="relative flex h-[16px] shrink-0 items-center justify-end pr-[49px] text-[8px] whitespace-nowrap">
                <svg class="mr-1 h-[10px] w-[13px] text-[#aaa]" viewBox="0 0 13 10" fill="none" stroke="currentColor"><path d="M2.500 1c-2 2.500-2 5.500 0 8M10.500 1c2 2.500 2 5.500 0 8M4.500 3c-1 1-1 3 0 4M8.500 3c1 1 1 3 0 4M3.500 9l6-8"/><circle cx="6.500" cy="5" r=".8"/></svg>
                <span>LIVE: 00:00:00</span><span class="mr-2 ml-2 size-[6px] rounded-full bg-[#c00d35]"></span><span>REC: 00:00:01</span><span class="ml-5">CPU: 0.3%, 30.00 fps</span>
                <svg class="absolute right-[1px] bottom-[1px] size-[6px]" viewBox="0 0 6 6"><path d="M4 0h1v1H4zM2 2h1v1H2zM4 2h1v1H4zM0 4h1v1H0zM2 4h1v1H2zM4 4h1v1H4z" fill="#ccc"/></svg>
            </div>
        </main>

        <!-- Mouse pointer -->
        <svg class="absolute top-[393px] left-[979px] h-[21px] w-[14px]" viewBox="0 0 14 21"><path d="M1.500 1.500v16l3.700-3.500 2.500 5.500 2.300-1-2.500-5.300h5z" fill="#fff" stroke="#333"/></svg>
    </div>

    <script>
        // Punctuation toolbar
        const marks = ['，', '。', '、', '；', '：', '！', '？', '（）', '〔〕', '【】', '「」', '『』', '〈〉', '《》', '‘ ’', '“ ”', '…', '‥', '‧'];
        document.getElementById('marks').innerHTML = marks.map(m =>
            `<button class="flex min-h-0 flex-1 items-center justify-center whitespace-nowrap">${m}</button>`).join('');

        // Vertical ruler, one cell per centimetre
        const cells = ['1', '', '1', '2', '3', '4', '5', '6', '7', '8', '9', '10', '11', '12', '13', '14', '15'];
        document.getElementById('ruler').innerHTML = cells.map(n =>
            `<span class="flex h-[25px] shrink-0 flex-col items-center justify-between"><i class="mt-2 h-px w-[2px] bg-[#888]"></i><b class="-rotate-90 font-normal leading-[8px]">${n}</b></span>`).join('');

        // Mixer strips; level and peak are percentages of the meter
        const strips = [
            { name: '麥克風/輸入音效 1', level: 45, peak: 59 },
            { name: '輸出音效 1', level: 0, peak: 0 },
        ];
        const ticks = [-60, -55, -50, -45, -40, -35, -30, -25, -20, -15, -10, -5, 0];
        document.getElementById('mixer').innerHTML = strips.map(s => `
            <div class="h-[50px]">
                <div class="flex h-[13px] items-center justify-between"><span>${s.name}</span><span>0.0 dB</span></div>
                <div class="relative h-[5px] bg-[linear-gradient(90deg,#4a7d1e_67%,#8a611d_67%_86%,#82193a_86%)]">
                    <div class="absolute top-0 left-0 h-[2px] bg-[#7fc254]" style="width:${s.peak}%"></div>
                    <div class="absolute top-[3px] left-0 h-[2px] bg-[#79dc2f]" style="width:${s.level}%"></div>
                    <div class="absolute top-[2px] left-0 h-px w-full bg-[#25351f]/60"></div>
                </div>
                <div class="flex h-[9px] justify-between text-[7px] leading-[9px] text-[#ddd]">${ticks.map(t => `<span>${t}</span>`).join('')}</div>
                <div class="flex h-[17px] items-center">
                    <input type="range" value="100" aria-label="${s.name}" class="h-[7px] w-[138px] appearance-none bg-[linear-gradient(#3d7fbf,#3d7fbf)] bg-[length:100%_3px] bg-center bg-no-repeat [&::-webkit-slider-thumb]:h-[7px] [&::-webkit-slider-thumb]:w-[13px] [&::-webkit-slider-thumb]:appearance-none [&::-webkit-slider-thumb]:rounded-xs [&::-webkit-slider-thumb]:bg-white">
                    <button class="ml-[3px]" aria-label="靜音"><svg class="size-[12px]"><use href="#i-speaker"/></svg></button>
                    <button class="ml-auto mr-[2px] flex h-[17px] w-5 items-center justify-center rounded-xs bg-[#3c404b]" aria-label="選項"><svg class="size-[11px]"><use href="#i-dots"/></svg></button>
                </div>
            </div>`).join('');
    </script>
</body>
</html>
